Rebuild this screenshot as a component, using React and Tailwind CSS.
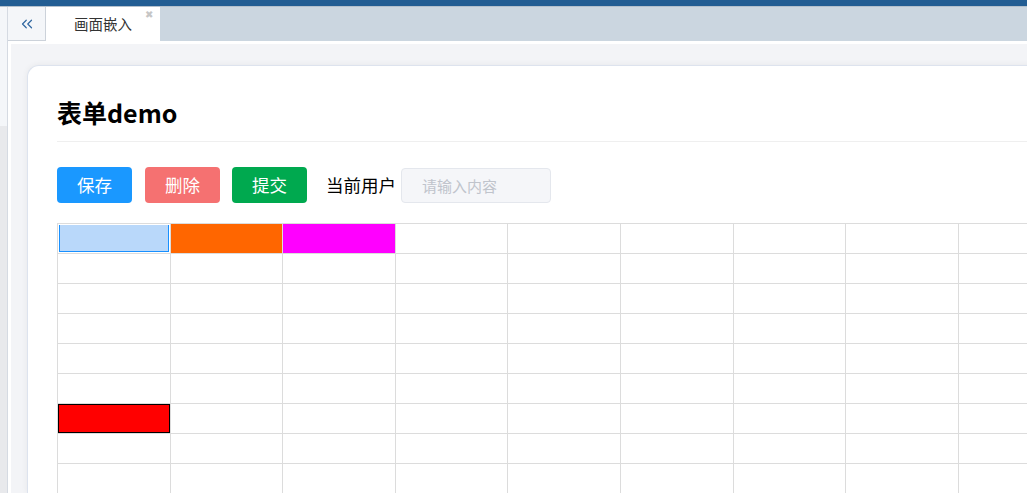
import { ChevronsLeft } from "lucide-react";

const COLS = 9;
const ROWS = 9;

// special cells: [row, col] -> classes
const cellStyle = (r, c) => {
  if (r === 0 && c === 0) return "p-px";
  if (r === 0 && c === 1) return "bg-[#ff6600]";
  if (r === 0 && c === 2) return "bg-[#ff00ff]";
  if (r === 6 && c === 0) return "bg-[#ff0000] border border-black";
  return "";
};

function Sheet() {
  const rows = Array.from({ length: ROWS }, (_, r) => r);
  const cols = Array.from({ length: COLS }, (_, c) => c);
  return (
    <div className="border-l border-t border-[#dcdcdc] w-max">
      {rows.map((r) => (
        <div key={r} className="flex">
          {cols.map((c) => (
            <div
              key={c}
              className="w-[112.6px] h-[30px] border-r border-b border-[#dcdcdc] bg-white"
            >
              <div className={`w-full h-full ${cellStyle(r, c)}`}>
                {r === 0 && c === 0 && (
                  <div className="w-full h-full bg-[#b9d8fa] border-l border-r border-b border-[#1890ff]" />
                )}
              </div>
            </div>
          ))}
        </div>
      ))}
    </div>
  );
}

export default function App() {
  return (
    <div
      className="w-[1027px] h-[493px] overflow-hidden flex flex-col bg-white"
      style={{ fontFamily: '"Noto Sans CJK SC", "Noto Sans", sans-serif' }}
    >
      {/* top bar */}
      <div className="h-[6px] bg-[#225d93] shrink-0" />
      <div className="h-px bg-[#b4c0cc] shrink-0" />

      <div className="flex flex-1 min-h-0">
        {/* left strip */}
        <div className="w-[8px] shrink-0 flex flex-col border-r border-[#d5dae2]">
          <div className="h-[119px] bg-[#f4f6f9]" />
          <div className="flex-1 bg-[#e8e9ec]" />
        </div>

        <div className="flex-1 flex flex-col min-w-0">
          {/* tab bar */}
          <div className="h-[34px] bg-[#cbd6e0] flex shrink-0">
            <div className="w-[38px] bg-[#f4f6f9] border-r border-b border-[#ccd2da] flex items-center justify-center">
              <ChevronsLeft size={18} strokeWidth={1.6} className="text-[#2f66a0]" />
            </div>
            <div className="relative w-[114px] bg-white flex items-center justify-center text-[14.5px] text-[#333]">
              画面嵌入
              <span className="absolute right-[7px] top-[2px] text-[10px] leading-none text-[#c6c6c6]">
                ✖
              </span>
            </div>
          </div>

          {/* content */}
          <div className="flex-1 bg-white pt-[3px] pl-[3px] min-h-0">
            <div className="h-full bg-[#f3f4f7] pl-[16px] pt-[21px]">
              <div className="w-[1100px] h-full bg-white rounded-tl-[12px] border-l border-t border-[#dde3ee] shadow-[0_0_6px_rgba(0,0,0,0.06)] pl-[29px] pt-[30px]">
                <h1 className="text-[25px] leading-[32px] font-bold text-black">表单demo</h1>
                <div className="h-px bg-[#efefef] mt-[13px]" />

                <div className="flex items-center mt-[25px]">
                  <button className="w-[75px] h-[36px] rounded-[4px] bg-[#1a98ff] text-white text-[17.5px]">
                    保存
                  </button>
                  <button className="ml-[13px] w-[75px] h-[36px] rounded-[4px] bg-[#f57171] text-white text-[17.5px]">
                    删除
                  </button>
                  <button className="ml-[12px] w-[75px] h-[36px] rounded-[4px] bg-[#00a94f] text-white text-[17.5px]">
                    提交
                  </button>
                  <span className="ml-[19px] text-[17.5px] text-black">当前用户</span>
                  <input
                    placeholder="请输入内容"
                    className="ml-[5px] w-[150px] h-[35px] rounded-[4px] bg-[#f5f6f9] border border-[#e4e7ed] pl-[20px] text-[15px] outline-none placeholder:text-[#c0c4cc]"
                  />
                </div>

                <div className="mt-[20px]">
                  <Sheet />
                </div>
              </div>
            </div>
          </div>
        </div>
      </div>
    </div>
  );
}
